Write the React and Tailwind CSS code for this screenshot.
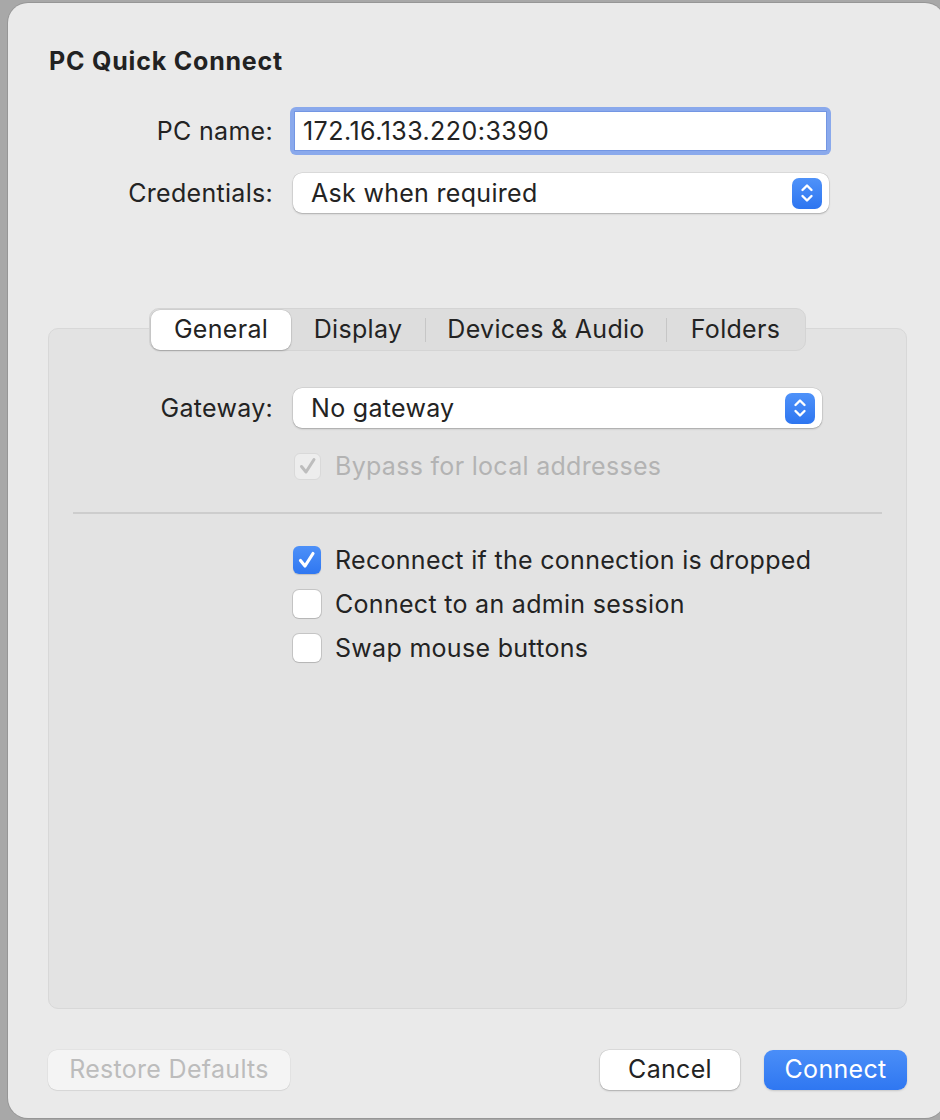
import React from "react";

const font = { fontFamily: "Inter, 'Liberation Sans', sans-serif" };

function Stepper() {
  return (
    <div className="flex h-[31px] w-[30px] items-center justify-center rounded-[7px] bg-gradient-to-b from-[#4f92f9] to-[#2d75f0]">
      <svg width="16" height="22" viewBox="0 0 16 22" fill="none">
        <path d="M3.5 8 L8 3.5 L12.5 8" stroke="white" strokeWidth="2.4" strokeLinecap="round" strokeLinejoin="round" />
        <path d="M3.5 14 L8 18.5 L12.5 14" stroke="white" strokeWidth="2.4" strokeLinecap="round" strokeLinejoin="round" />
      </svg>
    </div>
  );
}

function Popup({ text, width }) {
  return (
    <div
      className={`flex h-[40px] items-center justify-between rounded-[9px] bg-white pl-[18px] pr-[7px] shadow-[0_0_0_0.5px_rgba(0,0,0,0.12),0_1px_2px_rgba(0,0,0,0.22)] ${width}`}
    >
      <span className="text-[25px] leading-none tracking-[0.3px] text-[#232323]">{text}</span>
      <Stepper />
    </div>
  );
}

function Check({ checked, disabled }) {
  if (disabled) {
    return (
      <div className="flex h-[27px] w-[27px] items-center justify-center rounded-[6px] border border-[#d9d9d9] bg-[#ededed]">
        <svg width="22" height="22" viewBox="0 0 22 22" fill="none">
          <path d="M4.5 11.5 L9 17 L17 4.5" stroke="#bdbdbd" strokeWidth="3" strokeLinecap="round" strokeLinejoin="round" />
        </svg>
      </div>
    );
  }
  if (checked) {
    return (
      <div className="flex h-[28px] w-[28px] items-center justify-center rounded-[6px] bg-gradient-to-b from-[#4d90f8] to-[#2f77f1] shadow-[0_1px_1px_rgba(0,0,0,0.15)]">
        <svg width="22" height="22" viewBox="0 0 22 22" fill="none">
          <path d="M4.5 11.5 L9 17 L17 4.5" stroke="white" strokeWidth="3.2" strokeLinecap="round" strokeLinejoin="round" />
        </svg>
      </div>
    );
  }
  return (
    <div className="h-[28px] w-[28px] rounded-[6px] bg-white shadow-[0_0_0_1px_rgba(0,0,0,0.13),0_1px_1px_rgba(0,0,0,0.08)]" />
  );
}

function CheckRow({ checked, disabled, children }) {
  return (
    <div className="flex h-[28px] items-center gap-[14px]">
      <Check checked={checked} disabled={disabled} />
      <span className={`text-[25px] leading-none tracking-[0.3px] ${disabled ? "text-[#b3b3b3]" : "text-[#232323]"}`}>{children}</span>
    </div>
  );
}

export default function App() {
  return (
    <div style={font} className="h-[1120px] w-[940px] overflow-hidden bg-[#a8a8a8] pl-[8px] pt-[3px]">
      <div className="h-[1115px] w-[937px] rounded-[20px] bg-[#eaeaea] pl-[40px] pt-[43px] shadow-[0_0_0_1px_rgba(0,0,0,0.1)]">
        <div className="flex w-[859px] flex-col">
          <div className="h-[30px] pl-[1px] text-[25px] font-bold leading-[30px] tracking-[0.8px] text-[#222]">PC Quick Connect</div>

          {/* PC name */}
          <div className="mt-[31px] flex h-[48px] items-center">
            <div className="w-[225px] text-right text-[25px] leading-none tracking-[0.3px] text-[#232323]">PC name:</div>
            <div className="ml-[17px] h-[48px] w-[541px] rounded-[6px] bg-[#8aa9ec] p-[4px]">
              <div className="flex h-full w-full items-center border border-[#7396e3] bg-white pl-[8px]">
                <span className="text-[25px] leading-none tracking-[0.45px] text-[#232323]">172.16.133.220:3390</span>
              </div>
            </div>
          </div>

          {/* Credentials */}
          <div className="mt-[18px] flex h-[40px] items-center">
            <div className="w-[225px] text-right text-[25px] leading-none tracking-[0.3px] text-[#232323]">Credentials:</div>
            <div className="ml-[20px]">
              <Popup text="Ask when required" width="w-[536px]" />
            </div>
          </div>

          {/* Tabs */}
          <div className="mt-[95px] flex flex-col items-center">
            <div className="relative z-10 flex h-[43px] items-center rounded-[10px] border border-[#d4d4d4] bg-[#dddddd] p-[1px] text-[25px] tracking-[0.3px] text-[#232323]">
              <div className="flex h-[40px] w-[140px] items-center justify-center rounded-[9px] bg-white shadow-[0_0_0_0.5px_rgba(0,0,0,0.1),0_1px_2px_rgba(0,0,0,0.2)]">
                General
              </div>
              <div className="flex h-[40px] w-[134px] items-center justify-center">Display</div>
              <div className="h-[24px] w-px bg-[#c6c6c6]" />
              <div className="flex h-[40px] w-[240px] items-center justify-center">Devices &amp; Audio</div>
              <div className="h-[24px] w-px bg-[#c6c6c6]" />
              <div className="flex h-[40px] w-[137px] items-center justify-center">Folders</div>
            </div>

            <div className="-mt-[23px] flex h-[681px] w-[859px] flex-col rounded-[10px] border border-[#d8d8d8] bg-[#e3e3e3] pt-[59px]">
              <div className="flex h-[40px] items-center">
                <div className="w-[224px] text-right text-[25px] leading-none tracking-[0.3px] text-[#232323]">Gateway:</div>
                <div className="ml-[20px]">
                  <Popup text="No gateway" width="w-[529px]" />
                </div>
              </div>

              <div className="mt-[24px] pl-[245px]">
                <CheckRow disabled>Bypass for local addresses</CheckRow>
              </div>

              <div className="mx-[24px] mt-[32px] h-[2px] bg-[#cdcdcd]" />

              <div className="mt-[32px] flex flex-col gap-[16px] pl-[244px]">
                <CheckRow checked>Reconnect if the connection is dropped</CheckRow>
                <CheckRow>Connect to an admin session</CheckRow>
                <CheckRow>Swap mouse buttons</CheckRow>
              </div>
            </div>
          </div>

          {/* Buttons */}
          <div className="mt-[41px] flex h-[40px] items-center text-[25px] tracking-[0.3px]">
            <div className="flex h-[40px] w-[242px] items-center justify-center rounded-[9px] bg-[#f4f4f4] text-[#bcbcbc] shadow-[0_0_0_0.5px_rgba(0,0,0,0.06),0_1px_1px_rgba(0,0,0,0.06)]">
              Restore Defaults
            </div>
            <div className="flex-1" />
            <div className="flex h-[40px] w-[140px] items-center justify-center rounded-[9px] bg-white text-[#232323] shadow-[0_0_0_0.5px_rgba(0,0,0,0.12),0_1px_2px_rgba(0,0,0,0.22)]">
              Cancel
            </div>
            <div className="ml-[24px] flex h-[40px] w-[143px] items-center justify-center rounded-[9px] bg-gradient-to-b from-[#4a8ef8] to-[#2f77f1] text-white shadow-[0_1px_2px_rgba(0,0,0,0.15)]">
              Connect
            </div>
          </div>
        </div>
      </div>
    </div>
  );
}
